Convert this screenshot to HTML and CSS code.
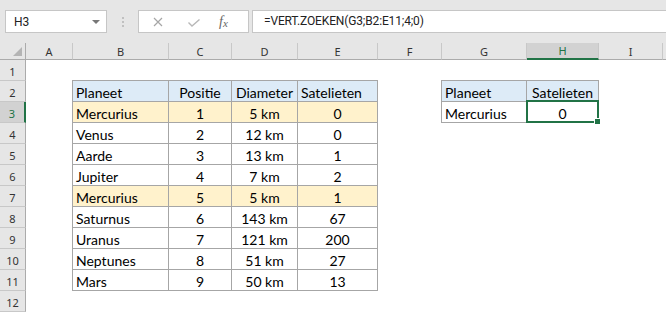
FILE: index.html
```html
<!DOCTYPE html>
<html lang="nl">
  <head>
    <meta charset="UTF-8" />
    <title>VERT.ZOEKEN</title>
    <link rel="stylesheet" href="styles.css">
  </head>
  <body>
    <div class="toolbar">
      <div class="namebox">
        <span>H3</span>
        <span class="caret"></span>
      </div>
      <div class="grip"><i></i><i></i><i></i></div>
      <div class="fx-buttons">
        <svg class="btn-x" width="10" height="10" viewBox="0 0 10 10">
          <path d="M1 1 L9 9 M9 1 L1 9" stroke="#a6a6a6" stroke-width="1.2" fill="none" />
        </svg>
        <svg class="btn-ok" width="12" height="8" viewBox="0 0 12 8">
          <path d="M0.5 3.5 L4 7 L11.5 0.5" stroke="#b8b8b8" stroke-width="1.4" fill="none" />
        </svg>
        <span class="fx">f<sub>x</sub></span>
      </div>
      <div class="formula">=VERT.ZOEKEN(G3;B2:E11;4;0)</div>
    </div>

    <div class="sheet">
      <!-- column headers -->
      <div class="corner"><span class="tri"></span></div>
      <div class="ch">A</div>
      <div class="ch">B</div>
      <div class="ch">C</div>
      <div class="ch">D</div>
      <div class="ch">E</div>
      <div class="ch">F</div>
      <div class="ch">G</div>
      <div class="ch on">H</div>
      <div class="ch">I</div>
      <div class="ch last"></div>

      <!-- 1 -->
      <div class="rh">1</div>
      <div></div><div></div><div></div><div></div><div></div><div></div><div></div><div></div><div></div><div></div>

      <!-- 2 -->
      <div class="rh">2</div>
      <div></div>
      <div class="t hd l top">Planeet</div>
      <div class="t hd top mid">Positie</div>
      <div class="t hd top mid">Diameter</div>
      <div class="t hd top">Satelieten</div>
      <div></div>
      <div class="t hd l top">Planeet</div>
      <div class="t hd top mid">Satelieten</div>
      <div></div><div></div>

      <!-- 3 -->
      <div class="rh on">3</div>
      <div></div>
      <div class="t hl l">Mercurius</div>
      <div class="t hl mid">1</div>
      <div class="t hl mid">5 km</div>
      <div class="t hl mid">0</div>
      <div></div>
      <div class="t l">Mercurius</div>
      <div class="t mid sel">0</div>
      <div></div><div></div>

      <!-- 4 -->
      <div class="rh">4</div>
      <div></div>
      <div class="t l">Venus</div>
      <div class="t mid">2</div>
      <div class="t mid">12 km</div>
      <div class="t mid">0</div>
      <div></div><div></div><div></div><div></div><div></div>

      <!-- 5 -->
      <div class="rh">5</div>
      <div></div>
      <div class="t l">Aarde</div>
      <div class="t mid">3</div>
      <div class="t mid">13 km</div>
      <div class="t mid">1</div>
      <div></div><div></div><div></div><div></div><div></div>

      <!-- 6 -->
      <div class="rh">6</div>
      <div></div>
      <div class="t l">Jupiter</div>
      <div class="t mid">4</div>
      <div class="t mid">7 km</div>
      <div class="t mid">2</div>
      <div></div><div></div><div></div><div></div><div></div>

      <!-- 7 -->
      <div class="rh">7</div>
      <div></div>
      <div class="t hl l">Mercurius</div>
      <div class="t hl mid">5</div>
      <div class="t hl mid">5 km</div>
      <div class="t hl mid">1</div>
      <div></div><div></div><div></div><div></div><div></div>

      <!-- 8 -->
      <div class="rh">8</div>
      <div></div>
      <div class="t l">Saturnus</div>
      <div class="t mid">6</div>
      <div class="t mid">143 km</div>
      <div class="t mid">67</div>
      <div></div><div></div><div></div><div></div><div></div>

      <!-- 9 -->
      <div class="rh">9</div>
      <div></div>
      <div class="t l">Uranus</div>
      <div class="t mid">7</div>
      <div class="t mid">121 km</div>
      <div class="t mid">200</div>
      <div></div><div></div><div></div><div></div><div></div>

      <!-- 10 -->
      <div class="rh">10</div>
      <div></div>
      <div class="t l">Neptunes</div>
      <div class="t mid">8</div>
      <div class="t mid">51 km</div>
      <div class="t mid">27</div>
      <div></div><div></div><div></div><div></div><div></div>

      <!-- 11 -->
      <div class="rh">11</div>
      <div></div>
      <div class="t l">Mars</div>
      <div class="t mid">9</div>
      <div class="t mid">50 km</div>
      <div class="t mid">13</div>
      <div></div><div></div><div></div><div></div><div></div>

      <!-- 12 -->
      <div class="rh">12</div>
      <div></div><div></div><div></div><div></div><div></div><div></div><div></div><div></div><div></div><div></div>
    </div>
  </body>
</html>
```

FILE: styles.css
```css
body {
  margin: 0;
  background: white;
  overflow: hidden;
}
.toolbar {
  display: flex;
  align-items: flex-start;
  height: 43px;
  box-sizing: border-box;
  padding-top: 10px;
  background: #e6e6e6;
  font-family: Roboto, sans-serif;
  font-size: 12px;
  color: #222;
}
.namebox {
  display: flex;
  align-items: center;
  justify-content: space-between;
  box-sizing: border-box;
  width: 102px;
  height: 23px;
  margin-left: 5px;
  padding: 0 6px 0 8px;
  background: white;
  border: 1px solid #c6c6c6;
}
.caret {
  width: 0;
  height: 0;
  border-left: 4px solid transparent;
  border-right: 4px solid transparent;
  border-top: 4px solid #777;
}
.grip {
  display: flex;
  flex-direction: column;
  gap: 2px;
  margin: 7px 0 0 15px;
}
.grip i {
  width: 2px;
  height: 2px;
  background: #c0c0c0;
}
.fx-buttons {
  display: flex;
  align-items: center;
  box-sizing: border-box;
  width: 111px;
  height: 23px;
  margin-left: 14px;
  background: white;
  border: 1px solid #c6c6c6;
}
.btn-x {
  margin-left: 14px;
}
.btn-ok {
  margin-left: 25px;
  margin-top: 2px;
}
.fx {
  margin-left: 19px;
  font-family: "Liberation Serif", serif;
  font-style: italic;
  font-size: 14px;
  color: #666;
}
.fx sub {
  font-size: 11px;
  vertical-align: -1px;
}
.formula {
  flex: 1;
  box-sizing: border-box;
  height: 23px;
  margin: 0 -2px 0 3px;
  padding: 3px 0 0 11px;
  background: white;
  border: 1px solid #c6c6c6;
  letter-spacing: -0.15px;
}

.sheet {
  display: grid;
  grid-template-columns: 26px 47px 96px 63px 66px 80px 64px 85px 72px 64px 1fr;
  grid-template-rows: 17px;
  grid-auto-rows: 21px;
}
.sheet > div {
  display: flex;
  align-items: flex-end;
  box-sizing: border-box;
  padding: 0 3px;
  white-space: nowrap;
  font-family: Lato, sans-serif;
  font-size: 14px;
  line-height: 17px;
  color: #000;
}
.sheet > .corner,
.sheet > .ch,
.sheet > .rh {
  align-items: center;
  justify-content: center;
  padding: 0;
  background: #e6e6e6;
  font-family: "Noto Sans", sans-serif;
  font-size: 11px;
  line-height: 14px;
  color: #333;
}
.sheet > .corner {
  position: relative;
  border-right: 1px solid #ababab;
  border-bottom: 1px solid #ababab;
}
.tri {
  position: absolute;
  right: 3px;
  bottom: 3px;
  width: 0;
  height: 0;
  border-left: 9px solid transparent;
  border-bottom: 9px solid #b4b4b4;
}
.sheet > .ch {
  padding-top: 1px;
  border-right: 1px solid #c8c8c8;
  border-bottom: 1px solid #ababab;
}
.sheet > .ch.last {
  border-right: none;
}
.sheet > .ch.on {
  background: #d2d2d2;
  border-bottom: 2px solid #217346;
  color: #217346;
}
.sheet > .rh {
  padding-top: 3px;
  border-right: 1px solid #ababab;
  border-bottom: 1px solid #c8c8c8;
}
.sheet > .rh.on {
  background: #d2d2d2;
  border-right: 2px solid #217346;
  color: #217346;
}

/* table cells */
.sheet > .t {
  border-right: 1px solid #a6a6a6;
  border-bottom: 1px solid #a6a6a6;
}
.sheet > .mid {
  justify-content: center;
}
.sheet > .l {
  box-shadow: -1px 0 0 #a6a6a6;
}
.sheet > .top {
  box-shadow: 0 -1px 0 #a6a6a6;
}
.sheet > .l.top {
  box-shadow: -1px 0 0 #a6a6a6, 0 -1px 0 #a6a6a6, -1px -1px 0 #a6a6a6;
}
.sheet > .hd {
  background: #ddebf7;
}
.sheet > .hl {
  background: #fff2cc;
}
.sheet > .sel {
  position: relative;
  z-index: 2;
}
.sel::before {
  content: "";
  position: absolute;
  left: -1px;
  top: -2px;
  right: -1px;
  bottom: -1px;
  border: 2px solid #217346;
}
.sel::after {
  content: "";
  position: absolute;
  right: -3px;
  bottom: -3px;
  width: 5px;
  height: 5px;
  background: #217346;
  border: 1px solid white;
}
```
